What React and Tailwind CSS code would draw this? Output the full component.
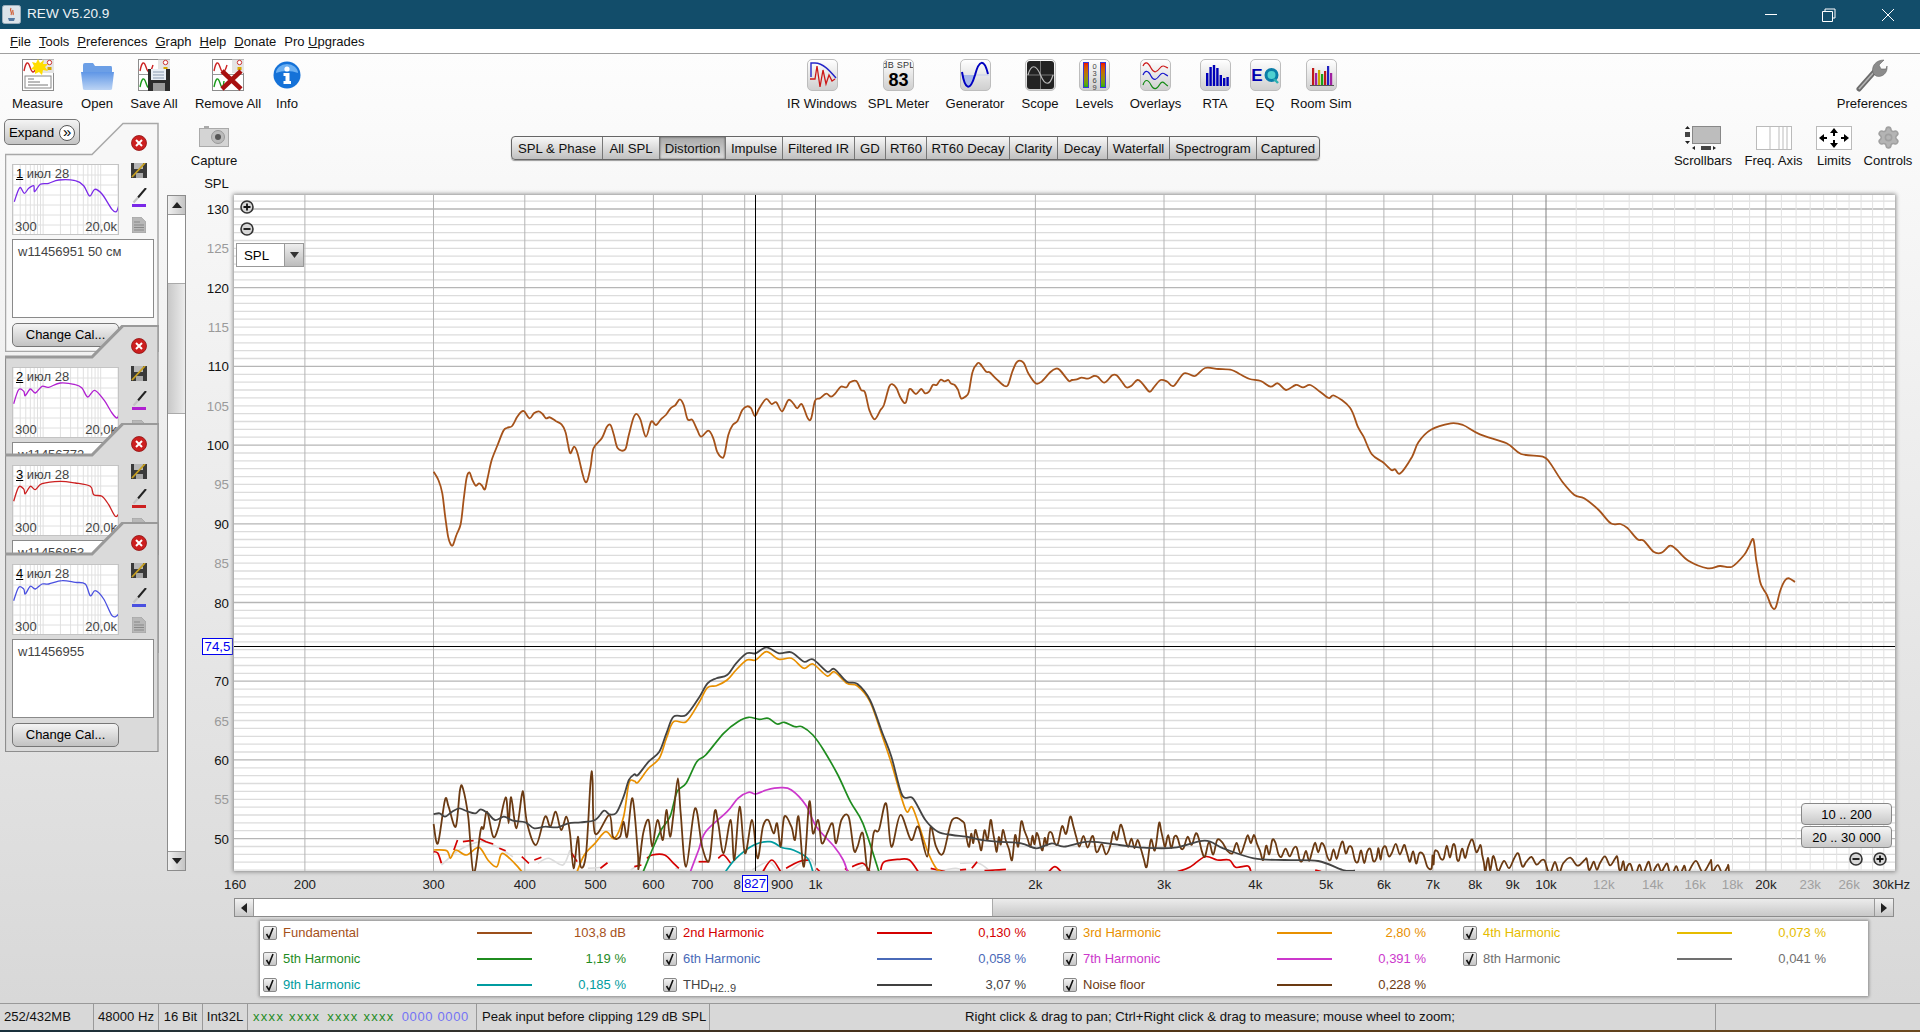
import React from 'react';
import { Settings } from 'lucide-react';

const FONT = "font-['Liberation_Sans',Arial,sans-serif]";

// plot scale, in page pixels
const fx = (f) => 815.5 + 730.5 * Math.log10(f / 1000);
const dy = (db) => 209 + (130 - db) * 7.87;

const crop = (ox, oy, sx) => (pts) => pts.map(([x, y]) => [ox + x / sx, oy + y / 3]);
const c6 = crop(960, 780, 1.633);
const c7 = crop(420, 620, 2.8);
const c8 = crop(420, 340, 2.063);
const c9 = crop(1160, 340, 2.063);

const smooth = (p) => {
  let d = `M${p[0][0].toFixed(1)} ${p[0][1].toFixed(1)}`;
  for (let i = 0; i < p.length - 1; i++) {
    const a = p[i - 1] || p[i];
    const b = p[i];
    const c = p[i + 1];
    const e = p[i + 2] || c;
    const k = 6;
    d += `C${(b[0] + (c[0] - a[0]) / k).toFixed(1)} ${(b[1] + (c[1] - a[1]) / k).toFixed(1)} ${(c[0] - (e[0] - b[0]) / k).toFixed(1)} ${(c[1] - (e[1] - b[1]) / k).toFixed(1)} ${c[0].toFixed(1)} ${c[1].toFixed(1)}`;
  }
  return d;
};

// the noise floor is much busier than the points read off it, add some ripple between them
const jag = (pts, amp) => {
  let seed = 7;
  const out = [];
  pts.forEach((p, i) => {
    out.push(p);
    const q = pts[i + 1];
    if (!q) return;
    seed = (seed * 75 + 74) % 65537;
    const r = seed / 65537 - 0.5;
    const mx = (p[0] + q[0]) / 2;
    const my = (p[1] + q[1]) / 2;
    out.push([mx - (q[0] - p[0]) / 6, my - amp * (0.6 + Math.abs(r))]);
    out.push([mx + (q[0] - p[0]) / 6, my + amp * (0.6 + Math.abs(r))]);
  });
  return out;
};

const fundamental = [
  ...c8([[28,395],[38,420],[46,460],[52,530],[58,590],[63,612],[68,615],[75,585],[84,552],[90,480],[96,415],[102,397],[108,420],[115,437],[122,430],[128,437],[134,448],[140,410],[148,360],[160,315],[172,272],[180,263],[190,258],[200,232],[208,217],[215,214],[226,235],[235,220],[245,214],[253,222],[260,235],[268,232],[280,243],[292,253],[300,275],[305,310],[310,340],[318,320],[325,340],[335,400],[340,423],[345,423],[352,380],[358,325],[375,295],[385,262],[393,255],[400,285],[408,325],[423,329],[430,290],[440,235],[447,222],[455,240],[466,290],[477,245],[487,255],[497,238],[507,225],[517,205],[527,195],[536,178],[544,195],[552,238],[562,240],[572,270],[580,290],[595,272],[605,295],[613,335],[622,352],[628,345],[636,285],[645,255],[655,243],[665,210],[675,199],[683,205],[691,228],[700,205],[714,177],[725,192],[735,187],[747,214],[760,180],[770,190],[778,205],[788,193],[800,235],[807,235],[815,182],[825,175],[838,161],[848,170],[857,160],[868,140],[880,142],[887,127],[900,123],[910,150],[918,157],[927,210],[938,238],[950,210],[957,195],[968,140],[975,133],[983,145],[992,175],[1002,188],[1010,147],[1023,162],[1034,147],[1042,160],[1050,155],[1058,135],[1066,135],[1074,119],[1082,124],[1090,120],[1095,130],[1103,135],[1110,150],[1116,175],[1125,170],[1132,157],[1140,95],[1150,70],[1156,72],[1168,95],[1175,97],[1190,118],[1205,137],[1213,135],[1222,95],[1232,65],[1245,68],[1255,100],[1270,130],[1282,125],[1300,97],[1312,86],[1320,90],[1338,122],[1345,120],[1355,118],[1365,113],[1378,116],[1390,108],[1398,110],[1412,128],[1428,106],[1437,106],[1448,125],[1457,142],[1467,138],[1480,120],[1490,130],[1505,155],[1515,140],[1528,120]]),
  ...c9([[15,125],[28,138],[50,100],[72,108],[93,84],[120,87],[148,90],[165,103],[185,117],[208,123],[228,140],[243,130],[260,150],[280,135],[295,142],[310,135],[330,155],[348,174],[360,167],[392,203],[408,260],[420,290],[437,343],[460,367],[477,390],[485,388],[496,400],[520,350],[533,307],[558,270],[600,250],[625,255],[660,283],[715,310],[745,342],[790,350],[805,370],[830,425],[855,465],[875,475],[905,510],[930,550],[950,552],[965,565],[985,598],[998,602],[1018,635],[1035,638],[1052,617],[1065,628],[1090,662],[1130,685],[1155,678],[1180,680],[1205,645],[1215,620],[1224,598],[1230,660],[1238,725],[1245,748],[1252,765],[1262,800],[1270,803],[1280,750],[1290,720],[1298,715],[1310,726]]),
];

const thd = [
  ...c7([[38,583],[55,580],[70,590],[90,575],[110,565],[130,573],[155,580],[170,568],[190,580],[210,600],[235,590],[260,602],[295,607],[320,625],[350,620],[385,622],[415,610],[450,607],[490,600],[515,572],[530,583],[550,578],[570,530],[585,480],[600,463],[610,465],[640,425],[670,395],[690,340],[710,290],[745,285],[780,235],[805,190],[830,175],[860,165],[885,130],[915,100],[940,100],[970,82],[1005,100],[1040,97],[1075,125],[1100,118],[1140,155],[1160,147],[1195,185],[1225,192],[1260,240],[1295,340],[1320,410],[1350,525],[1380,535],[1415,600],[1450,635],[1490,645],[1530,650]]),
  ...c6([[30,178],[60,185],[100,190],[125,205],[150,190],[170,200],[210,185],[260,195],[300,203],[350,203],[400,182],[430,205],[480,235],[530,240],[585,243],[625,270],[645,272]]),
];

const noise = [
  ...c7([[38,612],[50,670],[70,540],[80,560],[100,620],[112,510],[120,505],[135,590],[150,760],[170,630],[178,625],[188,575],[205,650],[220,620],[240,532],[248,610],[255,532],[270,625],[285,525],[290,525],[300,610],[325,675],[350,590],[365,620],[380,575],[395,630],[410,590],[420,640],[430,745],[442,650],[450,740],[465,700],[478,478],[483,478],[490,640],[530,585],[540,650],[560,650],[570,605],[580,650],[595,535],[610,700],[612,745],[625,640],[640,600],[650,680],[665,600],[680,660],[690,570],[700,650],[710,580],[722,475],[730,580],[745,740],[770,565],[790,680],[810,720],[825,575],[835,610],[850,700],[870,600],[880,720],[895,560],[910,700],[930,600],[945,715],[960,620],[975,600],[990,640],[1000,610],[1010,680],[1020,590],[1040,620],[1050,660],[1060,590],[1075,740],[1090,545],[1100,640],[1115,600],[1125,670],[1140,640],[1155,610],[1165,670],[1180,600],[1200,590],[1215,690],[1225,680],[1240,640],[1255,760],[1270,640],[1285,630],[1305,550],[1320,680],[1345,585],[1375,660],[1395,620],[1420,710],[1430,620],[1445,680],[1465,700],[1490,600]]),
  ...jag(c6([[5,125],[15,200],[25,150],[35,210],[50,120],[60,215],[70,150],[85,240],[100,125],[115,200],[125,160],[135,210],[145,160],[160,190],[180,110],[195,200],[215,170],[225,215],[245,200],[262,135],[275,200],[290,180],[305,260],[325,130],[335,200],[350,170],[365,205],[385,160],[400,230],[420,180],[445,220],[465,190],[480,165],[495,240],[510,180],[525,230],[545,205],[560,240],[575,215],[590,190],[605,240],[620,205],[635,200],[650,245],[665,215],[680,235],[690,208],[705,220],[725,195],[735,245],[750,220],[770,265],[775,215],[790,235],[805,195],[815,240],[830,200],[850,195],[858,275],[870,230],[880,272],[905,235],[925,245],[950,240],[965,275],[985,250],[1020,240],[1030,265],[1045,250],[1070,235],[1080,265],[1090,258],[1105,275],[1120,262],[1135,265],[1150,262],[1165,275],[1180,268],[1190,275],[1225,245],[1230,275],[1253,262],[1258,275]]), 6),
];

const third = [
  c7([[38,690],[75,692],[85,715],[100,690],[130,705],[165,682],[190,720],[215,740],[230,700],[265,730],[285,755]]),
  c7([[440,755],[460,705],[490,670],[520,635],[545,655],[570,590],[585,490],[600,483],[610,487],[640,445],[670,415],[690,355],[710,305],[745,305],[780,250],[805,203],[830,197],[860,180],[885,150],[915,120],[940,120],[970,95],[1005,118],[1040,115],[1075,145],[1100,132],[1140,168],[1160,155],[1195,190],[1225,198],[1260,245],[1295,350],[1320,430],[1360,570],[1380,565],[1420,690],[1445,745],[1460,755]]),
];
const fifth = c7([[625,755],[650,690],[675,630],[700,590],[720,515],[745,490],[775,425],[800,405],[850,340],[890,305],[920,292],[950,298],[975,295],[1000,312],[1020,307],[1050,320],[1070,320],[1100,345],[1130,390],[1170,465],[1205,545],[1240,610],[1285,755]]);
const seventh = c7([[757,755],[780,690],[800,635],[860,575],[890,535],[920,517],[940,522],[970,510],[1010,503],[1040,510],[1080,555],[1110,620],[1160,680],[1185,720],[1197,755]]);
const ninth = c7([[855,755],[885,715],[935,675],[980,665],[1015,683],[1045,690],[1085,715],[1100,755]]);

const second = [
  ...[[[38,695],[50,700],[60,730]],[[95,690],[105,660]],[[120,665],[150,662]],[[165,655],[185,665],[205,672]],[[222,685],[240,692]],[[285,710],[305,730]],[[320,720],[340,712]],[[425,700],[440,725]],[[505,745],[525,728]],[[600,740],[620,735]],[[635,715],[650,705],[685,705],[710,730],[725,745]],[[780,725],[810,725]],[[835,715],[850,705],[870,730]],[[960,755],[985,720],[1010,755]],[[1025,745],[1060,725],[1090,720]],[[1110,745],[1120,755]],[[1190,745],[1200,755]],[[1210,740],[1240,730],[1260,755]],[[1290,750],[1300,725],[1340,718],[1370,720],[1395,755]],[[1430,745],[1470,755]],[[1545,745],[1560,725]]].map(c7),
  ...[[[0,270],[10,268]],[[40,272],[75,268]],[[145,275],[155,260],[165,275]],[[355,275],[375,262],[400,230],[420,240],[440,240],[450,262],[470,258],[475,275]],[[580,270],[590,275]]].map(c6),
];
const eighth = [
  ...[[[60,735],[110,690],[170,665],[215,680],[260,710]],[[330,730],[360,715],[400,735],[420,690]],[[470,745],[510,742]],[[590,750],[610,735]],[[715,745],[750,755]],[[930,750],[975,725],[1000,750]],[[1040,750],[1090,715],[1110,750]],[[1220,750],[1250,730]],[[1430,750],[1470,750],[1500,745],[1530,755]]].map(c7),
  c6([[0,250],[30,250],[50,275]]),
];

const hGrid = Array.from({ length: 86 }, (_, i) => 46 + i);
const vGrid = [
  ...[200, 300, 400, 500, 600, 700, 800, 900, 2000, 3000, 4000, 5000, 6000, 7000, 8000, 9000, 20000].map((f) => [f, '#b4b4b4']),
  ...[1000, 10000].map((f) => [f, '#808080']),
  ...[11, 12, 13, 14, 15, 16, 17, 18, 19, 21, 22, 23, 24, 25, 26, 27, 28, 29].map((k) => [k * 1000, '#e2e2e2']),
];

// 75 is replaced by the cursor readout
const yLabels = Array.from({ length: 17 }, (_, i) => 130 - i * 5).filter((db) => db !== 75);

const xLabels = [
  [160, '160'], [200, '200'], [300, '300'], [400, '400'], [500, '500'], [600, '600'], [700, '700'], [781, '8'], [900, '900'], [1000, '1k'],
  [2000, '2k'], [3000, '3k'], [4000, '4k'], [5000, '5k'], [6000, '6k'], [7000, '7k'], [8000, '8k'], [9000, '9k'], [10000, '10k'],
  [12000, '12k', 1], [14000, '14k', 1], [16000, '16k', 1], [18000, '18k', 1], [20000, '20k'], [23000, '23k', 1], [26000, '26k', 1], [29700, '30kHz'],
];

const tabs = [
  ['SPL & Phase', 'w-[91px]'], ['All SPL', 'w-[57px]'], ['Distortion', 'w-[66px]'], ['Impulse', 'w-[57px]'], ['Filtered IR', 'w-[72px]'],
  ['GD', 'w-[31px]'], ['RT60', 'w-[41px]'], ['RT60 Decay', 'w-[83px]'], ['Clarity', 'w-[48px]'], ['Decay', 'w-[50px]'],
  ['Waterfall', 'w-[62px]'], ['Spectrogram', 'w-[87px]'], ['Captured', 'w-[62px]'],
];

const legend = [
  { label: 'Fundamental', value: '103,8 dB', text: 'text-[#a5511b]', line: 'bg-[#9c4f1a]' },
  { label: '2nd Harmonic', value: '0,130 %', text: 'text-[#d40000]', line: 'bg-[#d40000]' },
  { label: '3rd Harmonic', value: '2,80 %', text: 'text-[#e89000]', line: 'bg-[#e89000]' },
  { label: '4th Harmonic', value: '0,073 %', text: 'text-[#e6bc00]', line: 'bg-[#e6bc00]' },
  { label: '5th Harmonic', value: '1,19 %', text: 'text-[#1f8c1f]', line: 'bg-[#1f8c1f]' },
  { label: '6th Harmonic', value: '0,058 %', text: 'text-[#4a6ab8]', line: 'bg-[#4a6ab8]' },
  { label: '7th Harmonic', value: '0,391 %', text: 'text-[#cc38cc]', line: 'bg-[#cc38cc]' },
  { label: '8th Harmonic', value: '0,041 %', text: 'text-[#707070]', line: 'bg-[#707070]' },
  { label: '9th Harmonic', value: '0,185 %', text: 'text-[#009ca0]', line: 'bg-[#009ca0]' },
  { label: 'THD', sub: 'H2..9', value: '3,07 %', text: 'text-[#444444]', line: 'bg-[#404040]' },
  { label: 'Noise floor', value: '0,228 %', text: 'text-[#6b3a12]', line: 'bg-[#6b3a12]' },
];

const thumbF = [300, 400, 500, 600, 700, 800, 900, 1000, 2000, 3000, 4000, 5000, 6000, 7000, 8000, 9000, 10000, 20000];

const panels = [
  { n: '1', color: '#7a28e8', note: 'w11456951 50 см', selected: true, curve: [[4,110],[20,68],[34,85],[47,70],[62,62],[65,80],[82,58],[107,55],[137,45],[187,47],[212,62],[230,93],[245,73],[267,87],[297,133],[310,140],[317,123]] },
  { n: '2', color: '#b020d0', note: 'w11456772', curve: [[2,107],[17,65],[32,70],[37,83],[52,63],[67,75],[87,55],[107,58],[142,45],[187,50],[207,60],[224,87],[245,67],[272,95],[297,135],[312,150],[319,135]] },
  { n: '3', color: '#cc2020', note: 'w11456853', curve: [[2,106],[17,63],[32,69],[37,83],[52,61],[67,71],[87,53],[142,46],[187,51],[232,61],[242,86],[267,91],[287,116],[307,151],[319,141]] },
  { n: '4', color: '#4a50e0', note: 'w11456955', curve: [[2,107],[17,67],[32,72],[37,87],[52,64],[67,72],[87,57],[107,57],[147,47],[187,52],[217,57],[232,92],[247,77],[272,102],[297,152],[312,152],[319,142]] },
];

const Tile = ({ children, className = '' }) => (
  <div className={`w-[31px] h-[32px] rounded-[5px] border border-[#bdbdbd] bg-linear-to-b from-[#ffffff] to-[#cfcfcf] overflow-hidden ${className}`}>
    {children}
  </div>
);

const DocPanel = ({ children }) => (
  <svg width="32" height="32" viewBox="0 0 32 32">
    <rect x="0.5" y="0.5" width="31" height="31" fill="#fff" stroke="#8c8c8c" />
    <path d="M20 0.5 L32 0.5 L32 14 L20 14 Z" fill="#e4e4e4" />
    <circle cx="27.5" cy="3.5" r="2.2" fill="#fff" stroke="#c33" />
    <rect x="25.5" y="8" width="4" height="3" fill="#d8a800" />
    <path d="M2 12 C4 2 6 2 8 8 S12 16 15 6" fill="none" stroke="#c22" strokeWidth="1.4" />
    {children}
  </svg>
);

const MeasureIcon = () => (
  <DocPanel>
    <rect x="3" y="17" width="26" height="12" fill="#fff" stroke="#888" />
    <path d="M6 20h6M6 23h12M6 26h20" stroke="#777" strokeWidth="1" />
    <path d="M16 0 L18 4 L22 1 L21 5 L26 5 L23 8 L26 12 L21 11 L20 16 L17 13 L13 15 L13 11 L9 10 L12 7 L10 3 L14 4 Z" fill="#ffdd00" />
  </DocPanel>
);

const OpenIcon = () => (
  <svg width="33" height="32" viewBox="0 0 33 32">
    <defs>
      <linearGradient id="folderFill" x1="0" y1="0" x2="0" y2="1">
        <stop offset="0" stopColor="#5f96e6" />
        <stop offset="1" stopColor="#bcd4f4" />
      </linearGradient>
    </defs>
    <path d="M2 6 Q2 4 4 4 H12 L14 7 H30 Q31 7 31 9 V14 H2 Z" fill="#6c9fe6" />
    <path d="M0 13 H33 L31 30 Q31 31 29 31 H4 Q2 31 2 30 Z" fill="url(#folderFill)" />
  </svg>
);

const SaveAllIcon = () => (
  <DocPanel>
    <path d="M2 28 C4 18 6 18 8 24 S11 30 12 22" fill="none" stroke="#1a9a1a" strokeWidth="1.4" />
    <path d="M0.5 15.5H31" stroke="#999" />
    <rect x="10" y="10" width="22" height="22" fill="#2b2b2b" />
    <rect x="13" y="10" width="15" height="11" fill="#e8eef6" />
    <path d="M15 13h11M15 16h11M15 19h11" stroke="#8a9ab0" />
    <rect x="15" y="24" width="12" height="8" fill="#9a9a9a" />
  </DocPanel>
);

const RemoveAllIcon = () => (
  <DocPanel>
    <path d="M2 28 C4 18 6 18 8 24 S11 30 12 22" fill="none" stroke="#1a9a1a" strokeWidth="1.4" />
    <path d="M0.5 15.5H31" stroke="#999" />
    <path d="M10 12 L29 30 M29 12 L10 30" stroke="#a81010" strokeWidth="4.5" />
  </DocPanel>
);

const InfoIcon = () => (
  <svg width="28" height="28" viewBox="0 0 28 28">
    <circle cx="14" cy="14" r="13.5" fill="#1572d8" />
    <path d="M3 12 A11 9 0 0 1 25 12 A18 10 0 0 0 3 12" fill="#6cb0f2" />
    <circle cx="14" cy="8" r="2.6" fill="#fff" />
    <path d="M10.5 12 H16.5 V20 H18 V23 H10.5 V20 H12.5 V15 H10.5 Z" fill="#fff" />
  </svg>
);

const IrIcon = () => (
  <Tile>
    <svg width="29" height="30" viewBox="0 0 29 30">
      <path d="M3 17 V3 H7 C15 3 22 11 28 18" fill="none" stroke="#2626c8" strokeWidth="1.4" />
      <path d="M2 19 H7 L9 6 L12 27 L15 10 L18 24 L21 15 L24 21 L27 19" fill="none" stroke="#cc1818" strokeWidth="1.3" />
    </svg>
  </Tile>
);

const SplIcon = () => (
  <Tile className="flex flex-col items-center text-black">
    <span className="text-[9px] leading-[11px] tracking-[0.3px] text-[#333] whitespace-nowrap">dB SPL</span>
    <span className="text-[18px] leading-[19px] font-bold">83</span>
  </Tile>
);

const GeneratorIcon = () => (
  <Tile>
    <svg width="29" height="30" viewBox="0 0 29 30">
      <path d="M1 15 C5 30 9 30 14 15 Z" fill="#a8b8e8" />
      <path d="M14 15 H28" stroke="#c4cce8" />
      <path d="M1 12 C4 30 9 32 14 15 C18 0 23 -2 27 14" fill="none" stroke="#0000c0" strokeWidth="2" />
    </svg>
  </Tile>
);

const ScopeIcon = () => (
  <Tile className="p-[1px]">
    <svg width="27" height="28" viewBox="0 0 27 28">
      <rect width="27" height="28" rx="3" fill="#222" />
      <path d="M0 14H27M13.5 0V28" stroke="#777" />
      <path d="M1 14 C4 3 9 3 13.5 14 C18 25 23 25 26 14" fill="none" stroke="#bbb" strokeWidth="1.2" />
    </svg>
  </Tile>
);

const LevelsIcon = () => (
  <Tile className="flex justify-between px-[3px] py-[2px]">
    <div className="w-[6px] h-full border border-[#3a3ad8] bg-linear-to-b from-[#f00000] to-[#10b010]" />
    <div className="flex flex-col items-center text-[7.5px] leading-[7px] text-[#444] pt-[1px]">
      <span>0</span><span>3</span><span>6</span><span>9</span>
    </div>
    <div className="w-[6px] h-full border border-[#3a3ad8] bg-linear-to-b from-[#f00000] to-[#10b010]" />
  </Tile>
);

const OverlaysIcon = () => (
  <Tile>
    <svg width="29" height="30" viewBox="0 0 29 30" fill="none" strokeWidth="1.2">
      <path d="M2 6 C4 1 7 2 10 8 S16 12 19 8 S24 7 27 8" stroke="#cc1818" />
      <path d="M2 15 C4 10 7 10 10 16 S16 19 19 15 S24 15 27 16" stroke="#1818cc" />
      <path d="M2 25 C4 19 7 19 10 25 S16 29 19 24 S24 25 27 26" stroke="#148a14" />
    </svg>
  </Tile>
);

const RtaIcon = () => (
  <Tile>
    <svg width="29" height="30" viewBox="0 0 29 30" fill="#0000b8">
      <rect x="5" y="13" width="2.4" height="13" />
      <rect x="8.4" y="7" width="2.4" height="19" />
      <rect x="11.8" y="5" width="2.4" height="21" />
      <rect x="15.2" y="8" width="2.4" height="18" />
      <rect x="18.6" y="15" width="2.4" height="11" />
      <rect x="22" y="18" width="2.4" height="8" />
      <rect x="25.4" y="17" width="2.4" height="9" />
    </svg>
  </Tile>
);

const EqIcon = () => (
  <Tile className="flex items-center justify-center gap-[1px]">
    <span className="text-[17px] font-bold text-[#0000b0] leading-none">E</span>
    <svg width="15" height="17" viewBox="0 0 15 17">
      <circle cx="7.5" cy="8" r="5.5" fill="#4fd0d0" stroke="#0a7ea8" strokeWidth="3" />
      <path d="M10 12 L14 16" stroke="#2ab0b0" strokeWidth="2.4" />
    </svg>
  </Tile>
);

const RoomIcon = () => (
  <Tile>
    <svg width="29" height="30" viewBox="0 0 29 30">
      <rect x="5" y="8" width="2.2" height="17" fill="#c01818" />
      <rect x="8" y="13" width="2.2" height="12" fill="#a020a0" />
      <rect x="11" y="10" width="2.2" height="15" fill="#c8a800" />
      <rect x="14" y="14" width="2.2" height="11" fill="#18a018" />
      <rect x="17" y="11" width="2.2" height="14" fill="#c01818" />
      <rect x="20" y="6" width="2.2" height="19" fill="#2020c0" />
      <rect x="23" y="13" width="2.2" height="12" fill="#a020a0" />
      <path d="M3 25.5H27" stroke="#555" />
    </svg>
  </Tile>
);

const WrenchIcon = () => (
  <svg width="32" height="34" viewBox="0 0 32 34">
    <path d="M3 31 L19 13" stroke="#6c6c6c" strokeWidth="5" strokeLinecap="round" />
    <path d="M3 31 L19 13" stroke="#b4b4b4" strokeWidth="1.6" />
    <path d="M17 15 C15 8 20 2 28 2 L23 7 L25 11 L30 11 L31 8 C32 15 26 20 20 18 Z" fill="#8c8c8c" stroke="#666" strokeWidth="0.6" />
  </svg>
);

const CameraIcon = () => (
  <svg width="30" height="21" viewBox="0 0 30 21">
    <rect x="5" y="0" width="5" height="3" fill="#aaa" />
    <rect x="0.5" y="2.5" width="29" height="18" fill="#d4d4d4" stroke="#aaa" />
    <circle cx="19" cy="11" r="6.5" fill="#bbb" stroke="#999" />
    <circle cx="19" cy="11" r="3" fill="#555" />
  </svg>
);

const ScrollbarsIcon = () => (
  <svg width="37" height="24" viewBox="0 0 37 24">
    <rect x="7.5" y="0.5" width="28" height="17" fill="#bdbdbd" stroke="#888" />
    <path d="M2.5 0 L5 3 H0 Z M2.5 18 L5 15 H0 Z" fill="#222" />
    <rect x="0" y="6" width="5" height="5" fill="#444" />
    <path d="M7 22 L10 20 V24 Z M31 22 L28 20 V24 Z" fill="#222" />
    <rect x="16" y="20" width="10" height="4" fill="#444" />
  </svg>
);

const FreqAxisIcon = () => (
  <svg width="36" height="24" viewBox="0 0 36 24" fill="#fff" stroke="#bbb">
    <rect x="0.5" y="0.5" width="35" height="23" />
    <path d="M14 0V24M23 0V24M27 0V24M31 0V24" />
  </svg>
);

const LimitsIcon = () => (
  <svg width="36" height="24" viewBox="0 0 36 24">
    <rect x="0.5" y="0.5" width="35" height="23" fill="#fff" stroke="#bbb" />
    <path d="M18 2 L14 7 H17 V10 H19 V7 H22 Z M18 22 L14 17 H17 V14 H19 V17 H22 Z M3 12 L8 8 V11 H11 V13 H8 V16 Z M33 12 L28 8 V11 H25 V13 H28 V16 Z" fill="#000" />
  </svg>
);

const CloseRed = () => (
  <svg width="16" height="16" viewBox="0 0 16 16">
    <circle cx="8" cy="8" r="7.5" fill="#cc1f1f" stroke="#8f1010" strokeWidth="0.8" />
    <path d="M5 5 L11 11 M11 5 L5 11" stroke="#fff" strokeWidth="2" />
  </svg>
);

const FloppyPen = () => (
  <svg width="16" height="15" viewBox="0 0 16 15">
    <path d="M0 0H16V15H0Z" fill="#3a3a3a" />
    <rect x="3" y="0" width="9" height="6" fill="#b8b8b8" />
    <rect x="5" y="10" width="7" height="5" fill="#a8a8a8" />
    <path d="M1 14 L14 0" stroke="#c8a020" strokeWidth="1.8" />
  </svg>
);

const PenLine = ({ color }) => (
  <svg width="15" height="19" viewBox="0 0 15 19">
    <path d="M6 9.5 L14 0" stroke="#222" strokeWidth="2" />
    <path d="M1.5 14.5 L6 9.5" stroke="#c4c4c4" strokeWidth="2.2" />
    <rect x="0" y="16" width="14" height="3" fill={color} />
  </svg>
);

const DocIcon = () => (
  <svg width="14" height="16" viewBox="0 0 14 16">
    <path d="M0 0H9L14 5V16H0Z" fill="#b8b8b8" stroke="#999" strokeWidth="0.6" />
    <path d="M2 5H8M2 8H12M2 10.5H12M2 13H12" stroke="#888" />
  </svg>
);

const CircleZoom = ({ plus }) => (
  <svg width="14" height="14" viewBox="0 0 14 14">
    <circle cx="7" cy="7" r="6" fill="#d8d8d8" stroke="#333" strokeWidth="1.6" />
    <path d={plus ? 'M3.5 7H10.5M7 3.5V10.5' : 'M3.5 7H10.5'} stroke="#111" strokeWidth="1.8" />
  </svg>
);

const CheckBox = () => (
  <div className="w-[14px] h-[14px] shrink-0 rounded-[2px] border border-[#888] bg-linear-to-b from-[#f2f2f2] to-[#c4c4c4] flex items-center justify-center">
    <svg width="10" height="12" viewBox="0 0 10 12" fill="none">
      <path d="M1.5 7 L4 11 L8 1" stroke="#111" strokeWidth="1.6" />
    </svg>
  </div>
);

const Thumb = ({ n, color, curve }) => (
  <div className="relative w-[107px] h-[71px] bg-white border border-[#c4c4c4] overflow-hidden text-[#444] text-[13px] leading-[15px]">
    <svg width="105" height="69" viewBox="0 0 105 69" className="block">
      {[10, 20, 30, 40, 50, 60].map((y) => <path key={y} d={`M0 ${y}H105`} stroke="#e0e0e0" />)}
      {thumbF.map((f) => {
        const x = (105 * Math.log(f / 300)) / Math.log(20000 / 300);
        return <path key={f} d={`M${x} 0V69`} stroke="#e0e0e0" />;
      })}
      <path d={smooth(curve.map(([x, y]) => [x / 3, y / 3]))} fill="none" stroke={color} strokeWidth="1.3" />
    </svg>
    <span className="absolute left-[3px] top-[1px] whitespace-nowrap"><span className="underline text-black">{n}</span> июл 28</span>
    <span className="absolute left-[2px] bottom-[0px]">300</span>
    <span className="absolute right-[1px] bottom-[0px]">20,0k</span>
  </div>
);

const Panel = ({ n, color, note, curve, selected, className = '' }) => (
  <div className={`relative w-[154px] h-[230px] ml-[5px] ${className}`}>
    <svg width="154" height="230" viewBox="0 0 154 230" className="absolute inset-0">
      <path
        d="M0.5 32.5 H87 L118 1.5 H153 V229.5 H0.5 Z"
        fill={selected ? '#f7f7f7' : '#dadada'}
        stroke={selected ? '#a8a8a8' : '#8e8e8e'}
        strokeWidth={selected ? 1.5 : 1.2}
      />
      {!selected && <path d="M0 32 H87 L118 0.5 H154" fill="none" stroke="#999" strokeWidth="3" />}
    </svg>
    <div className="relative pl-[7px]">
      <div className="flex h-[113px]">
        <div className="pt-[42px]">
          <Thumb n={n} color={color} curve={curve} />
        </div>
        <div className="w-[42px] h-[120px] pt-[7px] flex flex-col items-center">
          <div className="h-[27px] shrink-0 flex items-center"><CloseRed /></div>
          <div className="h-[28px] shrink-0 flex items-center"><FloppyPen /></div>
          <div className="h-[27px] shrink-0 flex items-center"><PenLine color={color} /></div>
          <div className="h-[27px] shrink-0 flex items-center"><DocIcon /></div>
        </div>
      </div>
      <div className="mt-[4px] w-[142px] h-[79px] bg-white border border-[#8a8a8a] px-[5px] py-[4px] text-[13px] leading-[16px] text-[#444]">{note}</div>
      <button className="mt-[5px] w-[107px] h-[24px] rounded-[5px] border border-[#777] bg-linear-to-b from-[#f4f4f4] to-[#c2c2c2] text-[13px] text-black">Change Cal...</button>
    </div>
  </div>
);

const ToolItem = ({ w, label, icon }) => (
  <div className={`${w} flex flex-col items-center shrink-0`}>
    <div className="h-[32px] flex items-center justify-center">{icon}</div>
    <span className="mt-[5px] text-[13.1px] leading-[16px] text-[#111] whitespace-nowrap">{label}</span>
  </div>
);

const Plot = () => (
  <div className="relative w-[1661px] h-[676px] bg-white shadow-[0_0_4px_1px_#8c8c8c]">
    <svg width="1661" height="676" viewBox="234 195 1661 676" className="block">
      {hGrid.map((db) => (
        <path key={db} d={`M234 ${dy(db).toFixed(1)}H1895`} stroke={db % 10 === 0 ? '#b6b6b6' : '#dcdcdc'} strokeWidth="1.3" />
      ))}
      {vGrid.map(([f, c]) => (
        <path key={f} d={`M${fx(f).toFixed(1)} 195V871`} stroke={c} />
      ))}
      <g fill="none" strokeLinejoin="round">
        {eighth.map((p, i) => <path key={i} d={smooth(p)} stroke="#dcdcdc" strokeWidth="1.6" />)}
        {second.map((p, i) => <path key={i} d={smooth(p)} stroke="#d40000" strokeWidth="1.7" />)}
        <path d={smooth(ninth)} stroke="#009ca0" strokeWidth="1.7" />
        <path d={smooth(seventh)} stroke="#cc38cc" strokeWidth="1.7" />
        <path d={smooth(fifth)} stroke="#1f8c1f" strokeWidth="1.7" />
        {third.map((p, i) => <path key={i} d={smooth(p)} stroke="#e89000" strokeWidth="1.7" />)}
        <path d={smooth(noise)} stroke="#6b3a12" strokeWidth="1.8" />
        <path d={smooth(thd)} stroke="#444444" strokeWidth="1.8" />
        <path d={smooth(fundamental)} stroke="#a5521a" strokeWidth="1.8" />
      </g>
      <path d={`M234 646.5H1895M755.5 195V871`} stroke="#000" />
    </svg>
    <div className="absolute left-[6px] top-[5px] flex flex-col gap-[8px]">
      <CircleZoom plus />
      <CircleZoom />
    </div>
    <div className="absolute left-[2px] top-[48px] w-[68px] h-[24px] flex bg-white border border-[#999] text-[13.3px] text-black">
      <span className="flex-1 pl-[7px] leading-[23px]">SPL</span>
      <span className="w-[19px] flex items-center justify-center bg-linear-to-b from-[#eeeeee] to-[#bcbcbc] border-l border-[#999]">
        <svg width="9" height="6" viewBox="0 0 9 6"><path d="M0 0H9L4.5 6Z" fill="#333" /></svg>
      </span>
    </div>
    <div className="absolute right-[3px] bottom-[23px] w-[91px] flex flex-col gap-[1px] text-[13px] text-black">
      <button className="h-[22px] pt-[1px] rounded-[4px] border border-[#888] bg-linear-to-b from-[#f6f6f6] to-[#c8c8c8]">10 .. 200</button>
      <button className="h-[22px] pt-[1px] rounded-[4px] border border-[#888] bg-linear-to-b from-[#f6f6f6] to-[#c8c8c8]">20 .. 30 000</button>
    </div>
    <div className="absolute right-[8px] bottom-[5px] flex gap-[10px]">
      <CircleZoom />
      <CircleZoom plus />
    </div>
  </div>
);

const App = () => (
  <div className={`w-[1920px] h-[1032px] flex flex-col overflow-hidden ${FONT} text-[#111]`}>
    {/* title bar */}
    <div className="h-[29px] shrink-0 bg-[#124d6a] flex items-center pl-[2px] text-[#eef3f6]">
      <svg width="19" height="19" viewBox="0 0 19 19">
        <rect x="0.5" y="0.5" width="18" height="18" rx="2" fill="#dce4ea" stroke="#9fb0bc" />
        <path d="M6 13 H13 L12 16 H7 Z" fill="#5378a0" />
        <path d="M9 3 C7 6 11 7 9 10 M11 5 C10 7 12 8 11 10" fill="none" stroke="#d0552a" strokeWidth="1.2" />
      </svg>
      <span className="ml-[6px] text-[13.6px]">REW V5.20.9</span>
      <div className="ml-auto flex items-center">
        <svg width="60" height="29" viewBox="0 0 60 29" className="mr-[-3px]"><path d="M24 14.5H36" stroke="#fff" /></svg>
        <svg width="60" height="29" viewBox="0 0 60 29" fill="none" stroke="#fff"><path d="M24.5 11.5H34.5V21.5H24.5Z M27 11V9H37V18H35" /></svg>
        <svg width="60" height="29" viewBox="0 0 60 29" className="mr-[2px]"><path d="M24 9L36 21M36 9L24 21" stroke="#fff" /></svg>
      </div>
    </div>

    {/* menu */}
    <div className="h-[25px] shrink-0 bg-white border-b border-[#a0a0a0] flex items-center gap-[8px] pl-[10px] pt-[1px] text-[13px] text-[#111]">
      <span><u>F</u>ile</span>
      <span><u>T</u>ools</span>
      <span><u>P</u>references</span>
      <span><u>G</u>raph</span>
      <span><u>H</u>elp</span>
      <span><u>D</u>onate</span>
      <span>Pro <u>U</u>pgrades</span>
    </div>

    <div className="flex-1 min-h-0 flex flex-col bg-linear-to-b from-[#fdfdfd] to-[#d8d8d8]">
      {/* main toolbar */}
      <div className="h-[62px] shrink-0 flex pt-[5px] pl-[8px] pr-[16px]">
        <ToolItem w="w-[59px]" label="Measure" icon={<MeasureIcon />} />
        <ToolItem w="w-[60px]" label="Open" icon={<OpenIcon />} />
        <ToolItem w="w-[54px]" label="Save All" icon={<SaveAllIcon />} />
        <ToolItem w="w-[94px]" label="Remove All" icon={<RemoveAllIcon />} />
        <ToolItem w="w-[24px]" label="Info" icon={<InfoIcon />} />
        <div className="w-[483px] shrink-0" />
        <ToolItem w="w-[80px]" label="IR Windows" icon={<IrIcon />} />
        <ToolItem w="w-[73px]" label="SPL Meter" icon={<SplIcon />} />
        <ToolItem w="w-[80px]" label="Generator" icon={<GeneratorIcon />} />
        <ToolItem w="w-[50px]" label="Scope" icon={<ScopeIcon />} />
        <ToolItem w="w-[59px]" label="Levels" icon={<LevelsIcon />} />
        <ToolItem w="w-[63px]" label="Overlays" icon={<OverlaysIcon />} />
        <ToolItem w="w-[56px]" label="RTA" icon={<RtaIcon />} />
        <ToolItem w="w-[44px]" label="EQ" icon={<EqIcon />} />
        <ToolItem w="w-[68px]" label="Room Sim" icon={<RoomIcon />} />
        <div className="ml-auto">
          <ToolItem w="w-[64px]" label="Preferences" icon={<WrenchIcon />} />
        </div>
      </div>

      <div className="flex-1 min-h-0 flex">
        {/* measurement panels */}
        <div className="w-[167px] shrink-0 pt-[3px]">
          <button className="relative z-10 ml-[4px] w-[76px] h-[26px] pt-[1px] rounded-[5px] border border-[#777] bg-linear-to-b from-[#f4f4f4] to-[#c4c4c4] flex items-center justify-center gap-[5px] text-[13.3px] text-black">
            Expand
            <span className="w-[16px] h-[16px] rounded-full border border-[#555] bg-white flex items-center justify-center text-[15px] leading-none pb-[3px]">»</span>
          </button>
          {panels.map((p, i) => (
            <Panel
              key={p.n}
              {...p}
              className={['-mt-[23px]', '-mt-[27px]', '-mt-[132px]', '-mt-[131px]'][i]}
            />
          ))}
        </div>

        {/* vertical scrollbar */}
        <div className="w-[19px] shrink-0 mt-[79px] h-[676px] flex flex-col border border-[#8c8c8c] bg-white">
          <div className="h-[19px] shrink-0 flex items-center justify-center bg-linear-to-r from-[#f0f0f0] to-[#c4c4c4] border-b border-[#999]">
            <svg width="10" height="6" viewBox="0 0 10 6"><path d="M0 6H10L5 0Z" fill="#222" /></svg>
          </div>
          <div className="h-[68px] shrink-0" />
          <div className="h-[131px] shrink-0 bg-linear-to-r from-[#c8c8c8] to-[#ececec] border-y border-[#aaa]" />
          <div className="flex-1" />
          <div className="h-[19px] shrink-0 flex items-center justify-center bg-linear-to-r from-[#f0f0f0] to-[#c4c4c4] border-t border-[#999]">
            <svg width="10" height="6" viewBox="0 0 10 6"><path d="M0 0H10L5 6Z" fill="#222" /></svg>
          </div>
        </div>

        {/* graph area */}
        <div className="flex-1 min-w-0 flex flex-col">
          <div className="h-[79px] shrink-0 flex">
            <div className="w-[56px] shrink-0 flex flex-col items-center pt-[10px] text-[13.1px] leading-[16px]">
              <CameraIcon />
              <span className="mt-[6px]">Capture</span>
              <span className="mt-[7px] pl-[5px]">SPL</span>
            </div>
            <div className="ml-[269px] mt-[20px] h-[24px] flex rounded-[4px] border border-[#666] bg-linear-to-b from-[#f8f8f8] to-[#c0c0c0] shadow-[0_1px_1px_#999] overflow-hidden">
              {tabs.map(([name, w], i) => (
                <div
                  key={name}
                  className={`${w} shrink-0 pt-[1px] flex items-center justify-center text-[13.2px] text-[#111] whitespace-nowrap ${i < tabs.length - 1 ? 'border-r border-[#777]' : ''} ${name === 'Distortion' ? 'bg-linear-to-b from-[#a8a8a8] to-[#dcdcdc] shadow-[inset_0_0_2px_#444]' : ''}`}
                >
                  {name}
                </div>
              ))}
            </div>
            <div className="ml-auto mr-[6px] flex pt-[9px]">
              {[
                ['w-[76px]', 'Scrollbars', <ScrollbarsIcon />],
                ['w-[65px]', 'Freq. Axis', <FreqAxisIcon />],
                ['w-[56px]', 'Limits', <LimitsIcon />],
                ['w-[52px]', 'Controls', <Settings size={25} fill="#b4b4b4" stroke="#a0a0a0" strokeWidth={1.5} />],
              ].map(([w, label, icon]) => (
                <div key={label} className={`${w} flex flex-col items-center`}>
                  <div className="h-[25px] flex items-center">{icon}</div>
                  <span className="mt-[3px] text-[13.1px] leading-[16px] whitespace-nowrap">{label}</span>
                </div>
              ))}
            </div>
          </div>

          <div className="h-[676px] shrink-0 flex">
            <div className="relative w-[48px] shrink-0 text-[13.3px] leading-[16px]">
              {yLabels.map((db) => (
                <span
                  key={db}
                  className={`absolute right-[5px] ${db % 10 === 0 ? 'text-[#111]' : 'text-[#9a9a9a]'}`}
                  style={{ top: dy(db) - 195 - 7 }}
                >
                  {db}
                </span>
              ))}
              <span className="absolute left-[16px] top-[443px] w-[31px] h-[17px] bg-white border border-[#0000f0] text-[#0000f0] text-center leading-[15px]">74,5</span>
            </div>
            <Plot />
          </div>

          <div className="relative h-[27px] shrink-0 ml-[48px] text-[13.3px] leading-[16px]">
            {xLabels.map(([f, label, faint]) => (
              <span
                key={label}
                className={`absolute top-[6px] -translate-x-1/2 whitespace-nowrap ${faint ? 'text-[#a0a0a0]' : 'text-[#222]'}`}
                style={{ left: fx(f) - 234 + (f === 160 ? 1 : 0) }}
              >
                {label}
              </span>
            ))}
            <span className="absolute left-[508px] top-[4px] w-[26px] h-[17px] bg-white border border-[#0000f0] text-[#0000f0] text-center leading-[15px]">827</span>
          </div>

          <div className="h-[19px] shrink-0 ml-[48px] w-[1660px] flex border border-[#8c8c8c] bg-white">
            <div className="w-[19px] shrink-0 flex items-center justify-center bg-linear-to-b from-[#f2f2f2] to-[#c8c8c8] border-r border-[#999]">
              <svg width="6" height="10" viewBox="0 0 6 10"><path d="M6 0V10L0 5Z" fill="#222" /></svg>
            </div>
            <div className="w-[738px] shrink-0" />
            <div className="flex-1 bg-linear-to-b from-[#ececec] to-[#c8c8c8] border-l border-[#aaa]" />
            <div className="w-[19px] shrink-0 flex items-center justify-center bg-linear-to-b from-[#f2f2f2] to-[#c8c8c8] border-l border-[#999]">
              <svg width="6" height="10" viewBox="0 0 6 10"><path d="M0 0V10L6 5Z" fill="#222" /></svg>
            </div>
          </div>

          {/* legend */}
          <div className="mt-[4px] ml-[74px] w-[1608px] h-[75px] shrink-0 pl-[3px] grid grid-cols-[repeat(4,400px)] auto-rows-[26px] content-center bg-white shadow-[0_0_3px_1px_#888] text-[13px]">
            {legend.map((it) => (
              <div key={it.label} className={`flex items-center ${it.text}`}>
                <CheckBox />
                <span className="ml-[6px] w-[194px] pt-[1px] whitespace-nowrap">
                  {it.label}
                  {it.sub && <sub className="text-[11px]">{it.sub}</sub>}
                </span>
                <span className={`w-[55px] h-[2px] ${it.line}`} />
                <span className="w-[94px] pt-[1px] text-right whitespace-nowrap">{it.value}</span>
              </div>
            ))}
          </div>
        </div>
      </div>
    </div>

    {/* status bar */}
    <div className="h-[27px] shrink-0 bg-[#d8d8d8] border-t border-[#999] flex text-[13.1px] leading-[26px] text-[#111]">
      <div className="w-[94px] pl-[4px] border-r border-[#999] whitespace-nowrap">252/432MB</div>
      <div className="w-[65px] text-center border-r border-[#999] whitespace-nowrap">48000 Hz</div>
      <div className="w-[44px] text-center border-r border-[#999] whitespace-nowrap">16 Bit</div>
      <div className="w-[45px] text-center border-r border-[#999] whitespace-nowrap">Int32L</div>
      <div className="w-[229px] pl-[5px] border-r border-[#999] whitespace-nowrap text-[13px] tracking-[1.3px] flex gap-[7px]">
        <span className="text-[#1f8c1f]">xxxx xxxx</span>
        <span className="text-[#1f8c1f]">xxxx xxxx</span>
        <span className="text-[#7474f4] tracking-[0.65px]">0000 0000</span>
      </div>
      <div className="w-[233px] pl-[5px] border-r border-[#999] whitespace-nowrap">Peak input before clipping 129 dB SPL</div>
      <div className="w-[1006px] pr-[5px] text-center text-[13.2px] border-r border-[#999] whitespace-nowrap">Right click &amp; drag to pan; Ctrl+Right click &amp; drag to measure; mouse wheel to zoom;</div>
      <div className="flex-1" />
    </div>
    <div className="h-[2px] shrink-0 bg-linear-to-r from-[#18303c] via-[#4a3015] to-[#6b4a20]" />
  </div>
);

export default App;
